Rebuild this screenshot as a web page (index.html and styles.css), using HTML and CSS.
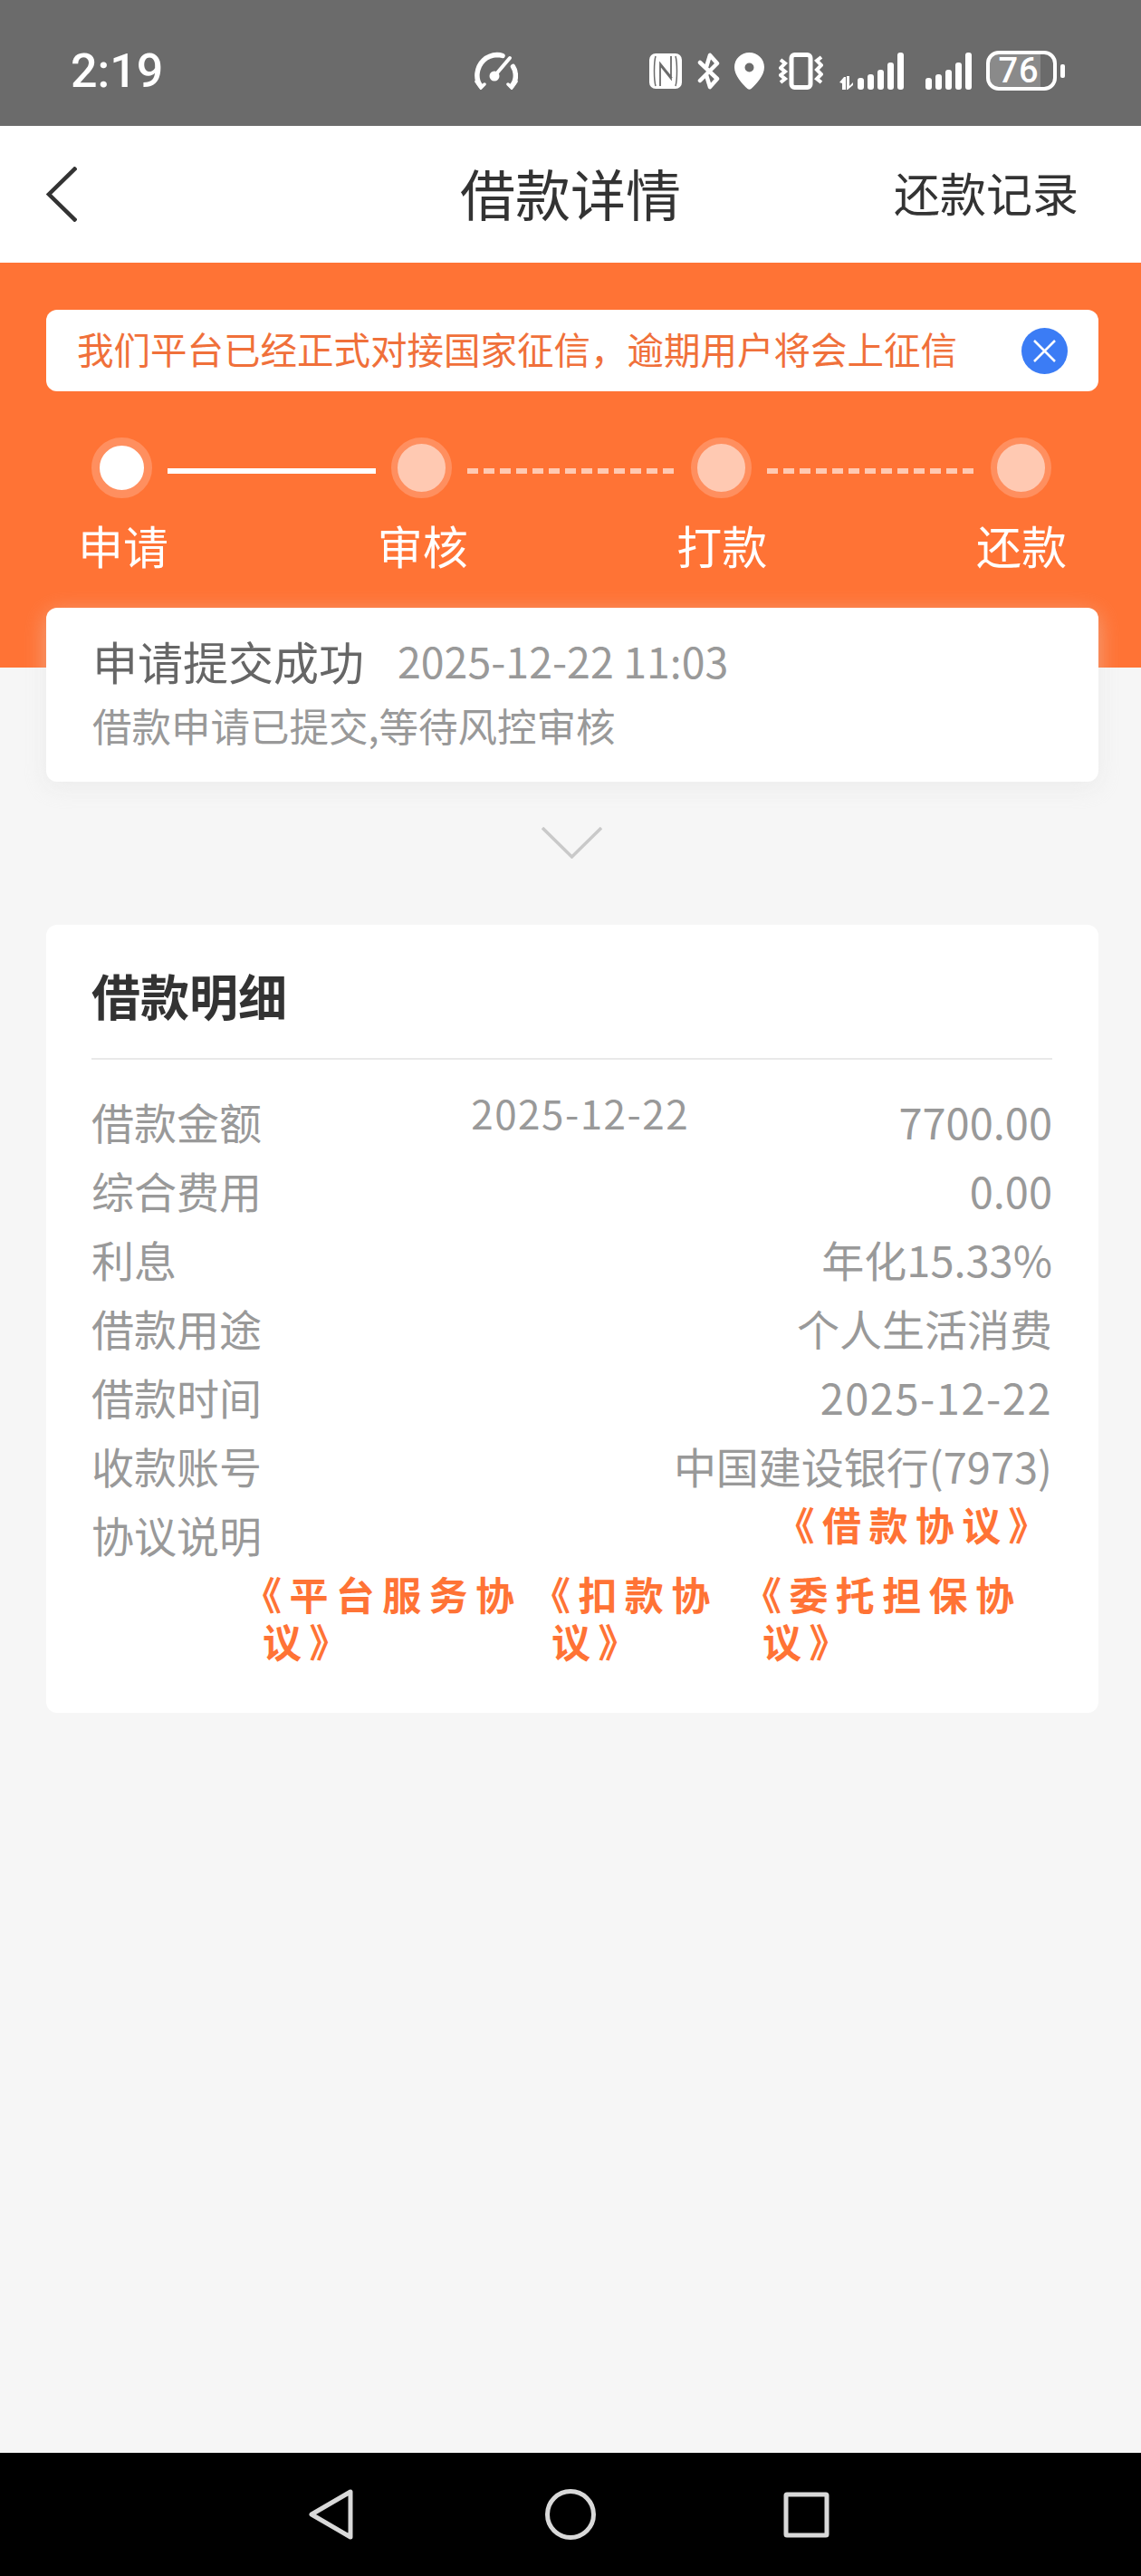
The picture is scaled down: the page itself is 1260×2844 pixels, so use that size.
FILE: index.html
```html
<!DOCTYPE html>
<html lang="zh-CN">
<head>
    <meta charset="UTF-8">
    <meta name="viewport" content="width=device-width, initial-scale=1.0">
    <title>借款详情</title>
    <link rel="stylesheet" href="styles.css">
</head>
<body>
    <!-- Status bar -->
    <div class="status-bar">
        <span class="status-time">2:19</span>
        <svg class="icon-speed" viewBox="0 0 48 42" fill="none" stroke="#fff" stroke-linecap="round">
            <path d="M7 38C3.500 34 2.500 29 3 24C4.500 12 13 4 25 3.500C27 3.500 29 3.800 31 4.500" stroke-width="5.500"/>
            <path d="M41 38C44.500 34 46 28 45 23C44.600 20.500 43.800 18.500 42.500 16.500" stroke-width="5.500"/>
            <path d="M2 33L7 40L11 36" stroke-width="3.500"/>
            <path d="M37 36L41 40L46 33" stroke-width="3.500"/>
            <path d="M22 27L39 7" stroke-width="4"/>
            <circle cx="22" cy="27" r="5.500" fill="#fff" stroke="none"/>
        </svg>
        <div class="status-icons">
            <svg class="icon-nfc" viewBox="0 0 36 39">
                <rect width="36" height="39" rx="7" fill="#fff"/>
                <path d="M7 3C5 10 5 29 7 36M29 3C31 10 31 29 29 36" stroke="#6b6b6b" stroke-width="1.500" fill="none"/>
                <path d="M12 36V11L25 27M24 3V28L12 13" stroke="#6b6b6b" stroke-width="1.800" fill="none"/>
            </svg>
            <svg class="icon-bt" viewBox="0 0 25 41" fill="none" stroke="#fff" stroke-width="4.500" stroke-linejoin="round" stroke-linecap="round">
                <path d="M3 11L22 29L14 38L10 25M3 31L22 12L14 3L10 16"/>
            </svg>
            <svg class="icon-pin" viewBox="0 0 33 41">
                <path fill="#fff" fill-rule="evenodd" d="M16.500 0C7.400 0 0 7.200 0 16.200C0 25.500 9 35 14.500 40C15.700 41 17.300 41 18.500 40C24 35 33 25.500 33 16.200C33 7.200 25.600 0 16.500 0ZM16.500 11.500A5 5 0 1 1 16.500 21.500A5 5 0 1 1 16.500 11.500Z"/>
            </svg>
            <svg class="icon-vibrate" viewBox="0 0 49 41" fill="none" stroke="#fff">
                <rect x="14" y="2.500" width="21" height="36" rx="3.500" stroke-width="5"/>
                <path d="M2 8L7 12L2 17L7 21L2 25L7 29L2 33" stroke-width="4"/>
                <path d="M47 5L42 9L47 14L42 19L47 24L42 29L47 33" stroke-width="4"/>
            </svg>
            <svg class="icon-signal1" viewBox="0 0 73 41" fill="#fff">
                <path d="M2 33L7 27H9V41H5V34ZM10 26H13V37L17 33V36L11 41H10Z"/>
                <rect x="22" y="28" width="7" height="13" rx="3"/>
                <rect x="33" y="24" width="7" height="17" rx="3"/>
                <rect x="44" y="19" width="7" height="22" rx="3"/>
                <rect x="55" y="11" width="7" height="30" rx="3"/>
                <rect x="66" y="0" width="7" height="41" rx="3"/>
            </svg>
            <svg class="icon-signal2" viewBox="0 0 51 41" fill="#fff">
                <rect x="0" y="28" width="7" height="13" rx="3"/>
                <rect x="11" y="24" width="7" height="17" rx="3"/>
                <rect x="22" y="19" width="7" height="22" rx="3"/>
                <rect x="33" y="11" width="7" height="30" rx="3"/>
                <rect x="44" y="0" width="7" height="41" rx="3"/>
            </svg>
            <div class="battery"><span>76</span></div>
            <div class="battery-nub"></div>
        </div>
    </div>

    <!-- Title bar -->
    <header class="nav-bar">
        <svg class="back-arrow" viewBox="0 0 34 61" fill="none" stroke="#333" stroke-width="4.500">
            <path d="M33 1L3 30.500L33 60"/>
        </svg>
        <h1>借款详情</h1>
        <a class="nav-link">还款记录</a>
    </header>

    <main class="page">
        <section class="banner">
            <div class="notice">
                <span>我们平台已经正式对接国家征信，逾期用户将会上征信</span>
                <button class="notice-close">
                    <svg viewBox="0 0 51 51" fill="none" stroke="#fff" stroke-width="2.500"><path d="M14 14L37 37M37 14L14 37"/></svg>
                </button>
            </div>
            <div class="steps">
                <div class="step-dot active"></div>
                <div class="step-line done"></div>
                <div class="step-dot"></div>
                <div class="step-line"></div>
                <div class="step-dot"></div>
                <div class="step-line"></div>
                <div class="step-dot"></div>
            </div>
            <div class="step-labels">
                <span>申请</span>
                <span>审核</span>
                <span>打款</span>
                <span>还款</span>
            </div>
        </section>

        <section class="status-card">
            <div class="status-head">
                <h2>申请提交成功</h2>
                <time>2025-12-22 11:03</time>
            </div>
            <p>借款申请已提交,等待风控审核</p>
        </section>

        <svg class="chevron" viewBox="0 0 67 35" fill="none" stroke="#c9c9c9" stroke-width="3.500">
            <path d="M1 1L33.500 33L66 1"/>
        </svg>

        <section class="detail-card">
            <h2>借款明细</h2>
            <div class="detail-rows">
                <div class="row">
                    <span>借款金额</span>
                    <span class="row-date">2025-12-22</span>
                    <span>7700.00</span>
                </div>
                <div class="row"><span>综合费用</span><span>0.00</span></div>
                <div class="row"><span>利息</span><span>年化15.33%</span></div>
                <div class="row"><span>借款用途</span><span>个人生活消费</span></div>
                <div class="row"><span>借款时间</span><span class="date-value">2025-12-22</span></div>
                <div class="row"><span>收款账号</span><span>中国建设银行(7973)</span></div>
                <div class="row">
                    <span>协议说明</span>
                    <a class="agreement first">《借款协议》</a>
                </div>
            </div>
            <div class="agreements">
                <a class="agreement">《平台服务协议》</a>
                <a class="agreement">《扣款协议》</a>
                <a class="agreement">《委托担保协议》</a>
            </div>
        </section>
    </main>

    <!-- Android nav buttons -->
    <footer class="system-nav">
        <svg class="sys-back" viewBox="0 0 49 56" fill="none" stroke="#d9d9d9" stroke-width="5" stroke-linejoin="round">
            <path d="M46 3V53L3 28Z"/>
        </svg>
        <svg class="sys-home" viewBox="0 0 56 56" fill="none" stroke="#d9d9d9" stroke-width="5">
            <circle cx="28" cy="28" r="25.500"/>
        </svg>
        <svg class="sys-recent" viewBox="0 0 51 51" fill="none" stroke="#d9d9d9" stroke-width="5" stroke-linejoin="round">
            <rect x="3" y="3" width="45" height="45" rx="1"/>
        </svg>
    </footer>
</body>
</html>
```

FILE: styles.css
```css
* {
    box-sizing: border-box;
}

body {
    font-family: "Noto Sans CJK SC", "Noto Sans", sans-serif;
    margin: 0;
    padding: 0;
    height: 2844px;
    display: flex;
    flex-direction: column;
    background-color: #f6f6f6;
    color: #333;
}

h1, h2, p {
    margin: 0;
    font-weight: 400;
}

/* status bar */
.status-bar {
    height: 139px;
    flex-shrink: 0;
    background-color: #6b6b6b;
    display: flex;
    align-items: center;
    padding: 17px 0 0 78px;
    color: #fff;
}

.status-time {
    font-family: Roboto, sans-serif;
    font-size: 52px;
    font-weight: 500;
    line-height: 60px;
    width: 99px;
    margin-top: 2px;
}

.icon-speed {
    width: 48px;
    height: 42px;
    margin-left: 347px;
}

.status-icons {
    display: flex;
    align-items: center;
    margin-left: 145px;
}

.icon-nfc { width: 36px; height: 39px; }
.icon-bt { width: 25px; height: 41px; margin-left: 17px; }
.icon-pin { width: 33px; height: 41px; margin-left: 16px; }
.icon-vibrate { width: 49px; height: 41px; margin-left: 16px; }
.icon-signal1 { width: 73px; height: 41px; margin-left: 16px; }
.icon-signal2 { width: 51px; height: 41px; margin-left: 24px; }

.battery {
    width: 78px;
    height: 44px;
    margin-left: 16px;
    border: 4px solid #fff;
    border-radius: 14px;
    background: linear-gradient(to right, #8a8a8a 80%, transparent 80%);
    display: flex;
    align-items: center;
    justify-content: center;
}

.battery span {
    font-family: Roboto, sans-serif;
    font-size: 38px;
    font-weight: 500;
    line-height: 36px;
    letter-spacing: 1px;
    margin-right: 6px;
}

.battery-nub {
    width: 5px;
    height: 15px;
    margin-left: 4px;
    background-color: #fff;
    border-radius: 2px;
}

/* title bar */
.nav-bar {
    height: 151px;
    flex-shrink: 0;
    background-color: #fff;
    display: grid;
    grid-template-columns: 1fr auto 1fr;
    align-items: center;
    padding: 0 51px;
}

.back-arrow {
    width: 34px;
    height: 61px;
}

.nav-bar h1 {
    font-size: 61px;
    line-height: 80px;
    margin-top: -3px;
}

.nav-link {
    justify-self: end;
    font-size: 51px;
    line-height: 70px;
    margin: -5px 18px 0 0;
}

/* orange header */
.page {
    flex: 1;
}

.banner {
    height: 447px;
    background-color: #ff7335;
    padding: 52px 47px 0 51px;
}

.notice {
    height: 90px;
    background-color: white;
    border-radius: 12px;
    display: flex;
    align-items: center;
    justify-content: space-between;
    padding: 0 34px;
    color: #f0703a;
    font-size: 40.500px;
    white-space: nowrap;
}

.notice span {
    margin-top: -5px;
}

.notice-close {
    width: 51px;
    height: 51px;
    border: none;
    border-radius: 50%;
    padding: 0;
    background-color: #3b7cf5;
    display: flex;
}

.notice-close svg {
    width: 51px;
    height: 51px;
}

.steps {
    display: flex;
    align-items: center;
    margin: 51px 52px 0 50px;
}

.step-dot {
    width: 67px;
    height: 67px;
    border-radius: 50%;
    flex-shrink: 0;
    background-color: #ffc9b2;
    border: 7px solid #ff8f5f;
}

.step-dot.active {
    background-color: white;
    border-width: 9px;
}

.step-line {
    flex: 1;
    height: 6px;
    margin: 6px 17px 0 17px;
    background-image: repeating-linear-gradient(to right, #ffc9b2 0, #ffc9b2 12px, transparent 12px, transparent 18px);
}

.step-line.done {
    background-image: none;
    background-color: white;
}

.step-labels {
    display: flex;
    justify-content: space-between;
    margin: 18px 35px 0 35px;
    color: white;
    font-size: 50px;
    line-height: 66px;
}

/* status card */
.status-card {
    height: 192px;
    margin: -66px 47px 0 51px;
    position: relative;
    background-color: white;
    border-radius: 12px;
    box-shadow: 0 6px 24px rgba(225, 225, 225, 0.45);
    padding: 24px 51px 0;
}

.status-head {
    display: flex;
    align-items: center;
    gap: 37px;
}

.status-head h2 {
    font-size: 50px;
    line-height: 66px;
    color: #666;
}

.status-head time {
    font-size: 46.500px;
    color: #999;
}

.status-card p {
    font-size: 43.500px;
    line-height: 60px;
    margin-top: 9px;
    color: #999;
}

.chevron {
    display: block;
    width: 67px;
    height: 35px;
    margin: 50px auto 73px;
    transform: translateX(1px);
}

/* details */
.detail-card {
    height: 870px;
    margin: 0 47px 0 51px;
    background-color: white;
    border-radius: 12px;
    padding: 0 51px 0 50px;
}

.detail-card h2 {
    height: 149px;
    font-size: 54px;
    font-weight: 700;
    line-height: 156px;
    border-bottom: 2px solid #e9e9e9;
    margin-bottom: 29px;
}

.row {
    height: 76px;
    display: flex;
    align-items: center;
    justify-content: space-between;
    font-size: 47px;
    color: #999;
}

.row-date {
    align-self: flex-start;
    margin-top: -3px;
    font-size: 44px;
    letter-spacing: 1.500px;
}

.date-value {
    letter-spacing: 1.500px;
}

.agreement {
    color: #ff7335;
    font-size: 43px;
    font-weight: 700;
    line-height: 52px;
    letter-spacing: 8.400px;
    text-indent: -22px;
}

.agreement.first {
    align-self: flex-start;
    margin: 1px -3px 0 0;
}

.agreements {
    display: grid;
    grid-template-columns: 319px 233px 320px;
    justify-content: end;
    margin-top: 2px;
}

/* android nav */
.system-nav {
    height: 136px;
    flex-shrink: 0;
    background-color: black;
    display: flex;
    align-items: center;
    padding: 0 0 0 341px;
}

.sys-back { width: 49px; height: 56px; }
.sys-home { width: 56px; height: 56px; margin-left: 212px; }
.sys-recent { width: 51px; height: 51px; margin-left: 207px; }
```
